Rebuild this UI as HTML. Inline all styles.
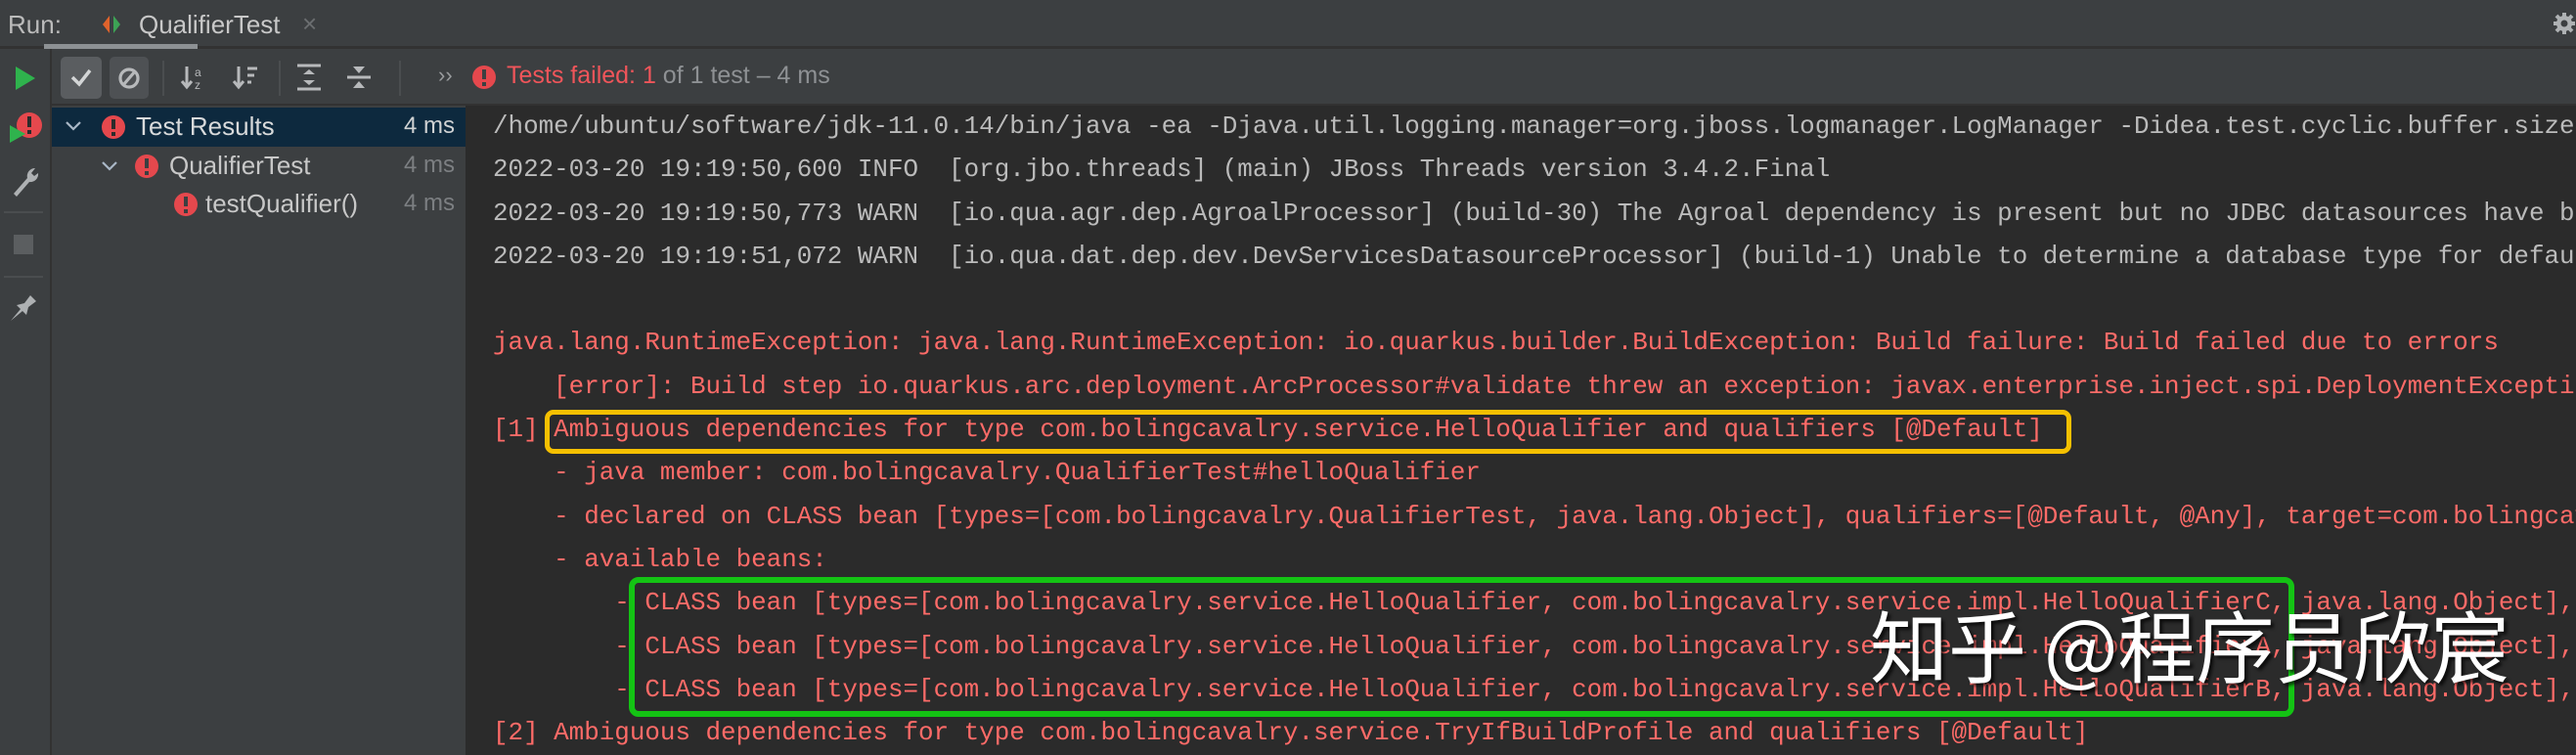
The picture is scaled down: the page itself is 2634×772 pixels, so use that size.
<!DOCTYPE html>
<html><head><meta charset="utf-8"><style>
*{margin:0;padding:0;box-sizing:border-box}
html,body{width:2634px;height:772px;overflow:hidden}
body{background:#3c3f41;position:relative;font-family:"Liberation Sans","Noto Sans CJK SC",sans-serif;color:#bbb}
.abs{position:absolute}
.tabbar{left:0;top:0;width:2634px;height:50px;background:#3c3f41;border-bottom:3px solid #323232}
.toolbar{left:0;top:50px;width:2634px;height:58px;background:#3c3f41;border-bottom:2px solid #323232}
.strip{left:0;top:50px;width:53px;height:722px;background:#3c3f41;border-right:2px solid #323232}
.tree{left:53px;top:108px;width:423px;height:664px;background:#3c3f41}
.console{left:476px;top:108px;width:2158px;height:664px;background:#2b2b2b;overflow:hidden}
.mono{font-family:"Liberation Mono",monospace;font-size:25.9px;line-height:44.3px}
.line{height:44.3px;white-space:pre;overflow:hidden}
.r{color:#ff6b68}
.g{color:#bbbbbb}
.t{font-size:26px;white-space:nowrap}
</style></head><body>
<div class="abs tabbar"></div>
<div class="abs t" style="left:8px;top:10px;color:#bbb">Run:</div>
<svg class="abs" style="left:103px;top:13px" width="22" height="24" viewBox="0 0 22 24"><path d="M9 3L2 12L9 21Z" fill="#e0632c"/><path d="M13 3L20 12L13 21Z" fill="#3da355"/></svg>
<div class="abs t" style="left:142px;top:10px;color:#c8c8c8">QualifierTest</div>
<div class="abs t" style="left:309px;top:9px;color:#6b6e70;font-size:26px">×</div>
<div class="abs" style="left:45px;top:45px;width:157px;height:5px;background:#8d9194"></div>
<svg class="abs" style="left:2610px;top:12px" width="24" height="24" viewBox="0 0 24 24"><circle cx="12" cy="12" r="8" fill="#aeb1b3"/><g stroke="#aeb1b3" stroke-width="4"><path d="M12 1v22M1 12h22M4 4l16 16M20 4L4 20"/></g><circle cx="12" cy="12" r="3.5" fill="#3c3f41"/></svg>

<div class="abs toolbar"></div>
<div class="abs strip"></div>
<svg class="abs" style="left:14px;top:67px" width="24" height="26"><path d="M2 1L22 13L2 25Z" fill="#2fb34d"/></svg>
<svg class="abs" style="left:8px;top:110px" width="36" height="40"><circle cx="22" cy="18" r="13" fill="#e5484d"/><rect x="20" y="9" width="4" height="11" fill="#2b2b2b"/><rect x="20" y="23" width="4" height="4" fill="#2b2b2b"/><path d="M2 18L18 27L2 36Z" fill="#2fb34d"/></svg>
<svg class="abs" style="left:10px;top:168px" width="30" height="34"><path d="M4 30L18 14A8 8 0 0 1 26 4L22 9L25 12L29 9A8 8 0 0 1 20 18L7 33Z" fill="#aeb1b3"/></svg>
<div class="abs" style="left:4px;top:216px;width:40px;height:2px;background:#4a4d4f"></div>
<div class="abs" style="left:14px;top:240px;width:20px;height:20px;background:#5b5e60"></div>
<div class="abs" style="left:4px;top:282px;width:40px;height:2px;background:#4a4d4f"></div>
<svg class="abs" style="left:9px;top:300px" width="30" height="30"><path d="M2 28L12 16L8 12L16 10L22 2L28 8L20 14L18 22L14 18Z" fill="#aeb1b3"/></svg>

<div class="abs" style="left:62px;top:58px;width:42px;height:43px;background:#5a5d60;border-radius:5px"></div>
<svg class="abs" style="left:71px;top:68px" width="24" height="22"><path d="M3 11L10 18L21 4" stroke="#d3d5d6" stroke-width="3.5" fill="none"/></svg>
<div class="abs" style="left:112px;top:58px;width:40px;height:43px;background:#4e5154;border-radius:5px"></div>
<svg class="abs" style="left:119px;top:66px" width="26" height="28"><circle cx="13" cy="14" r="9" stroke="#b7b9bb" stroke-width="3.2" fill="none"/><path d="M7 21L19 7" stroke="#b7b9bb" stroke-width="3.2"/></svg>
<div class="abs" style="left:166px;top:62px;width:2px;height:36px;background:#4a4d4f"></div>
<svg class="abs" style="left:183px;top:64px" width="30" height="30"><path d="M8 4V24M3 19L8 25L13 19" stroke="#b7b9bb" stroke-width="3" fill="none"/><text x="16" y="14" font-size="12" fill="#b7b9bb" font-family="Liberation Sans">a</text><text x="16" y="27" font-size="12" fill="#b7b9bb" font-family="Liberation Sans">z</text></svg>
<svg class="abs" style="left:236px;top:64px" width="30" height="30"><path d="M8 4V24M3 19L8 25L13 19" stroke="#b7b9bb" stroke-width="3" fill="none"/><path d="M17 6h10M17 13h7M17 20h4" stroke="#b7b9bb" stroke-width="3"/></svg>
<div class="abs" style="left:285px;top:62px;width:2px;height:36px;background:#4a4d4f"></div>
<svg class="abs" style="left:302px;top:64px" width="28" height="30"><path d="M2 3h24M2 27h24" stroke="#b7b9bb" stroke-width="3"/><path d="M8 12L14 7L20 12Z M8 18L14 23L20 18Z" fill="#b7b9bb"/></svg>
<svg class="abs" style="left:353px;top:64px" width="28" height="30"><path d="M2 15h24" stroke="#b7b9bb" stroke-width="3"/><path d="M8 4L14 11L20 4Z M8 26L14 19L20 26Z" fill="#b7b9bb"/></svg>
<div class="abs" style="left:408px;top:62px;width:2px;height:36px;background:#4a4d4f"></div>
<div class="abs t" style="left:448px;top:64px;color:#9a9c9e;font-size:22px">››</div>
<svg class="abs" style="left:482px;top:66px" width="26" height="26"><circle cx="13" cy="13" r="12" fill="#e5484d"/><rect x="11" y="5" width="4" height="10" fill="#3c3f41"/><rect x="11" y="18" width="4" height="4" fill="#3c3f41"/></svg>
<div class="abs t" style="left:518px;top:63px;font-size:25px"><span style="color:#f0555a">Tests failed: 1</span><span style="color:#8e9194"> of 1 test – 4 ms</span></div>

<div class="abs tree"></div>
<div class="abs" style="left:53px;top:110px;width:423px;height:40px;background:#0d293e"></div>
<svg class="abs" style="left:65px;top:122px" width="20" height="14"><path d="M3 3L10 10L17 3" stroke="#a9b7c6" stroke-width="2.2" fill="none"/></svg>
<svg class="abs" style="left:103px;top:117px" width="26" height="26"><circle cx="13" cy="13" r="12" fill="#e5484d"/><rect x="11" y="5" width="4" height="10" fill="#2b2b2b"/><rect x="11" y="18" width="4" height="4" fill="#2b2b2b"/></svg>
<div class="abs t" style="left:139px;top:114px;color:#d8dadb">Test Results</div>
<div class="abs t" style="left:413px;top:115px;color:#d0d2d3;font-size:24px">4 ms</div>

<svg class="abs" style="left:102px;top:163px" width="20" height="14"><path d="M3 3L10 10L17 3" stroke="#a9b7c6" stroke-width="2.2" fill="none"/></svg>
<svg class="abs" style="left:137px;top:157px" width="26" height="26"><circle cx="13" cy="13" r="12" fill="#e5484d"/><rect x="11" y="5" width="4" height="10" fill="#3c3f41"/><rect x="11" y="18" width="4" height="4" fill="#3c3f41"/></svg>
<div class="abs t" style="left:173px;top:154px;color:#c8c8c8">QualifierTest</div>
<div class="abs t" style="left:413px;top:155px;color:#7c7f82;font-size:24px">4 ms</div>

<svg class="abs" style="left:177px;top:196px" width="26" height="26"><circle cx="13" cy="13" r="12" fill="#e5484d"/><rect x="11" y="5" width="4" height="10" fill="#3c3f41"/><rect x="11" y="18" width="4" height="4" fill="#3c3f41"/></svg>
<div class="abs t" style="left:210px;top:193px;color:#c8c8c8">testQualifier()</div>
<div class="abs t" style="left:413px;top:194px;color:#7c7f82;font-size:24px">4 ms</div>

<div class="abs console"></div>
<div class="abs mono" style="left:504px;top:107px;width:2130px;height:665px;overflow:hidden"><div class="line g">/home/ubuntu/software/jdk-11.0.14/bin/java -ea -Djava.util.logging.manager=org.jboss.logmanager.LogManager -Didea.test.cyclic.buffer.size=1048576</div><div class="line g">2022-03-20 19:19:50,600 INFO  [org.jbo.threads] (main) JBoss Threads version 3.4.2.Final</div><div class="line g">2022-03-20 19:19:50,773 WARN  [io.qua.agr.dep.AgroalProcessor] (build-30) The Agroal dependency is present but no JDBC datasources have been defined.</div><div class="line g">2022-03-20 19:19:51,072 WARN  [io.qua.dat.dep.dev.DevServicesDatasourceProcessor] (build-1) Unable to determine a database type for default datasource</div><div class="line"> </div><div class="line r">java.lang.RuntimeException: java.lang.RuntimeException: io.quarkus.builder.BuildException: Build failure: Build failed due to errors</div><div class="line r">    [error]: Build step io.quarkus.arc.deployment.ArcProcessor#validate threw an exception: javax.enterprise.inject.spi.DeploymentException</div><div class="line r">[1] Ambiguous dependencies for type com.bolingcavalry.service.HelloQualifier and qualifiers [@Default]</div><div class="line r">    - java member: com.bolingcavalry.QualifierTest#helloQualifier</div><div class="line r">    - declared on CLASS bean [types=[com.bolingcavalry.QualifierTest, java.lang.Object], qualifiers=[@Default, @Any], target=com.bolingcavalry.QualifierTest]</div><div class="line r">    - available beans:</div><div class="line r">        - CLASS bean [types=[com.bolingcavalry.service.HelloQualifier, com.bolingcavalry.service.impl.HelloQualifierC, java.lang.Object], qualifiers</div><div class="line r">        - CLASS bean [types=[com.bolingcavalry.service.HelloQualifier, com.bolingcavalry.service.impl.HelloQualifierA, java.lang.Object], qualifiers</div><div class="line r">        - CLASS bean [types=[com.bolingcavalry.service.HelloQualifier, com.bolingcavalry.service.impl.HelloQualifierB, java.lang.Object], qualifiers</div><div class="line r">[2] Ambiguous dependencies for type com.bolingcavalry.service.TryIfBuildProfile and qualifiers [@Default]</div></div>
<div class="abs" style="left:557px;top:419px;width:1561px;height:45px;border:5px solid #f5c000;border-radius:9px"></div>
<div class="abs" style="left:643px;top:590px;width:1703px;height:143px;border:6px solid #14c314;border-radius:10px"></div>
<div class="abs" style="left:1912px;top:608px;font-size:80px;line-height:100px;color:#fff;white-space:nowrap;font-family:'Noto Sans CJK SC',sans-serif;text-shadow:3px 3px 3px rgba(0,0,0,.7)">知乎 @程序员欣宸</div>
</body></html>
